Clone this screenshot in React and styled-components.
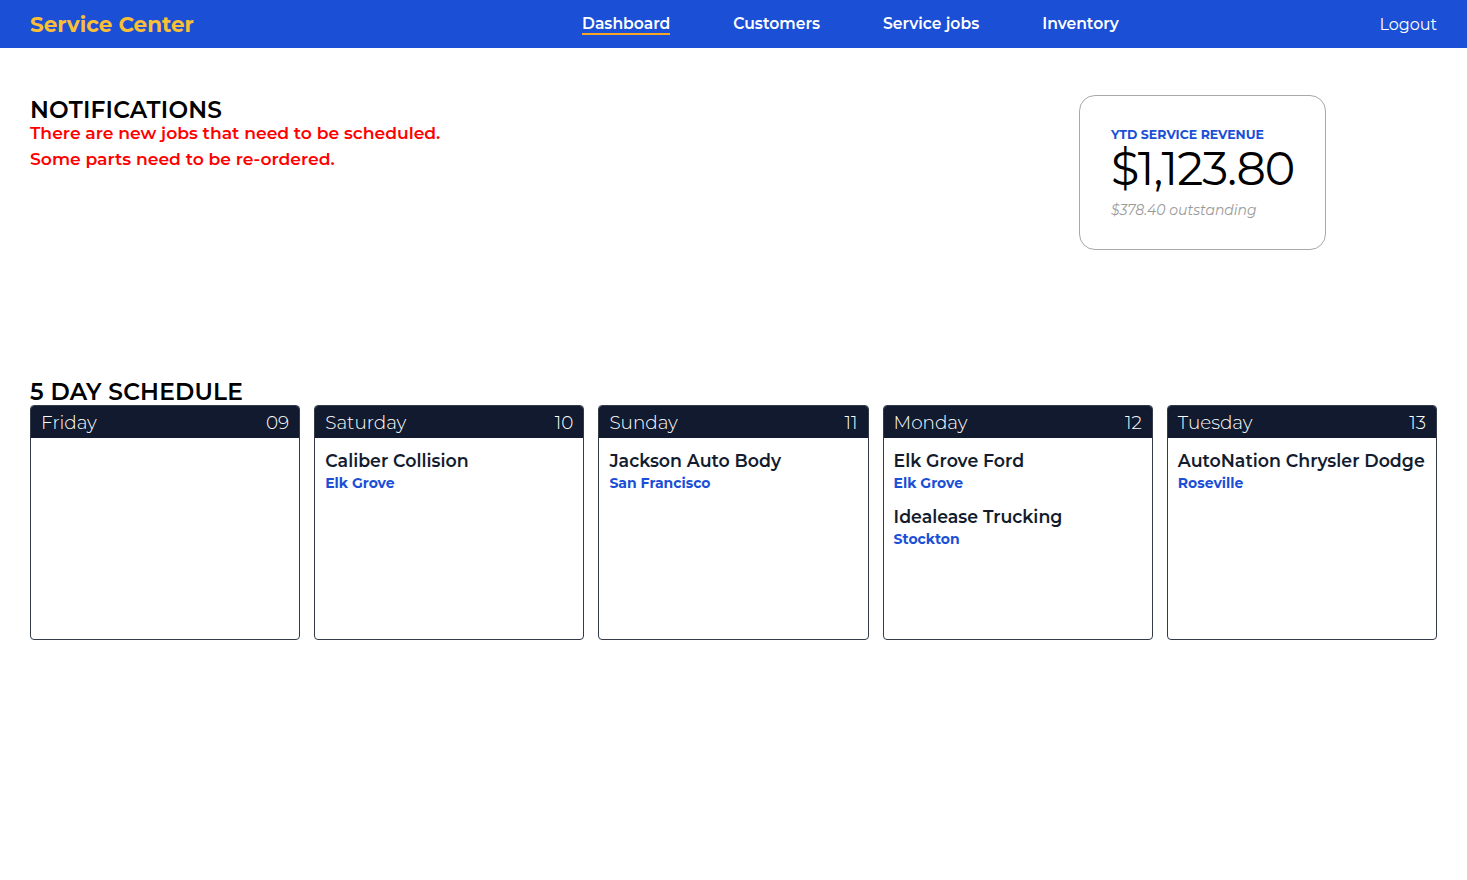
import React from "react";
import styled, { createGlobalStyle } from "styled-components";

const GlobalStyle = createGlobalStyle`
  body {
    margin: 0;
    font-family: Montserrat, Inter, "Noto Sans", sans-serif;
    background: #ffffff;
    color: #000000;
  }
`;

const NavBar = styled.nav`
  height: 48px;
  background: #1a4fd6;
  display: flex;
  align-items: center;
  padding: 0 30px;
`;

const Brand = styled.div`
  font-size: 21.5px;
  font-weight: 700;
  color: #fbbf35;
  width: 552px;
  flex: none;
`;

const NavLinks = styled.div`
  display: flex;
  gap: 63px;
`;

const NavLink = styled.a`
  color: #ffffff;
  font-size: 15.6px;
  font-weight: 600;
  line-height: 18px;
  text-decoration: none;
  padding-top: 1px;
  border-bottom: 2px solid ${(p) => (p.$active ? "#f5a623" : "transparent")};
  white-space: nowrap;
`;

const NavRight = styled.div`
  flex: 1;
  display: flex;
  justify-content: flex-end;
`;

const Logout = styled.a`
  color: #ffffff;
  font-size: 16px;
  font-weight: 400;
`;

const Main = styled.main`
  padding: 0 30px;
`;

const TopGrid = styled.section`
  display: grid;
  grid-template-columns: 1fr 1fr 1fr;
  padding-top: 47px;
  height: 332px;
  box-sizing: border-box;
`;

const Notifications = styled.div`
  grid-column: span 2;
  padding-top: 4px;
`;

const SectionTitle = styled.h2`
  margin: 0;
  font-size: 23.3px;
  font-weight: 600;
  line-height: 21px;
  letter-spacing: 0.2px;
`;

const Alert = styled.p`
  margin: 0;
  color: #ff0000;
  font-size: 17.2px;
  font-weight: 600;
  line-height: 26px;
`;

const RevenueWrap = styled.div`
  display: flex;
  justify-content: center;
  align-items: flex-start;
`;

const RevenueCard = styled.div`
  width: 247px;
  height: 155px;
  box-sizing: border-box;
  border: 1px solid #a8a8a8;
  border-radius: 16px;
  padding: 31px 31px 0;
`;

const RevenueLabel = styled.div`
  font-size: 12.5px;
  font-weight: 700;
  color: #1a4fd6;
  line-height: 16px;
`;

const RevenueValue = styled.div`
  font-size: 46px;
  font-weight: 400;
  line-height: 52px;
  letter-spacing: -1px;
`;

const Outstanding = styled.div`
  margin-top: 6px;
  font-size: 14px;
  font-style: italic;
  color: #9a9a9a;
`;

const ScheduleTitle = styled(SectionTitle)`
  line-height: 24px;
  margin-bottom: 1px;
`;

const DayGrid = styled.div`
  display: grid;
  grid-template-columns: repeat(5, 1fr);
  gap: 14px;
`;

const DayCard = styled.div`
  height: 235px;
  box-sizing: border-box;
  border: 1px solid #333a48;
  border-radius: 4px;
  overflow: hidden;
`;

const DayHeader = styled.div`
  background: #111a2e;
  color: #ffffff;
  height: 32px;
  display: flex;
  align-items: center;
  justify-content: space-between;
  padding: 0 10px;
  font-size: 18.4px;
  font-weight: 300;
`;

const DayBody = styled.div`
  padding: 12px 10px 10px;
`;

const Job = styled.div`
  margin-bottom: 12px;
`;

const JobName = styled.div`
  font-size: 17.4px;
  font-weight: 600;
  color: #131c2e;
  line-height: 22px;
`;

const JobCity = styled.div`
  font-size: 14px;
  font-weight: 700;
  color: #1a4fd6;
  line-height: 22px;
`;

const days = [
  { name: "Friday", num: "09", jobs: [] },
  { name: "Saturday", num: "10", jobs: [{ name: "Caliber Collision", city: "Elk Grove" }] },
  { name: "Sunday", num: "11", jobs: [{ name: "Jackson Auto Body", city: "San Francisco" }] },
  {
    name: "Monday",
    num: "12",
    jobs: [
      { name: "Elk Grove Ford", city: "Elk Grove" },
      { name: "Idealease Trucking", city: "Stockton" },
    ],
  },
  { name: "Tuesday", num: "13", jobs: [{ name: "AutoNation Chrysler Dodge", city: "Roseville" }] },
];

export default function App() {
  return (
    <>
      <GlobalStyle />
      <NavBar>
        <Brand>Service Center</Brand>
        <NavLinks>
          <NavLink $active>Dashboard</NavLink>
          <NavLink>Customers</NavLink>
          <NavLink>Service jobs</NavLink>
          <NavLink>Inventory</NavLink>
        </NavLinks>
        <NavRight>
          <Logout>Logout</Logout>
        </NavRight>
      </NavBar>
      <Main>
        <TopGrid>
          <Notifications>
            <SectionTitle>NOTIFICATIONS</SectionTitle>
            <Alert>There are new jobs that need to be scheduled.</Alert>
            <Alert>Some parts need to be re-ordered.</Alert>
          </Notifications>
          <RevenueWrap>
            <RevenueCard>
              <RevenueLabel>YTD SERVICE REVENUE</RevenueLabel>
              <RevenueValue>$1,123.80</RevenueValue>
              <Outstanding>$378.40 outstanding</Outstanding>
            </RevenueCard>
          </RevenueWrap>
        </TopGrid>
        <section>
          <ScheduleTitle>5 DAY SCHEDULE</ScheduleTitle>
          <DayGrid>
            {days.map((d) => (
              <DayCard key={d.name}>
                <DayHeader>
                  <span>{d.name}</span>
                  <span>{d.num}</span>
                </DayHeader>
                <DayBody>
                  {d.jobs.map((j) => (
                    <Job key={j.name}>
                      <JobName>{j.name}</JobName>
                      <JobCity>{j.city}</JobCity>
                    </Job>
                  ))}
                </DayBody>
              </DayCard>
            ))}
          </DayGrid>
        </section>
      </Main>
    </>
  );
}
